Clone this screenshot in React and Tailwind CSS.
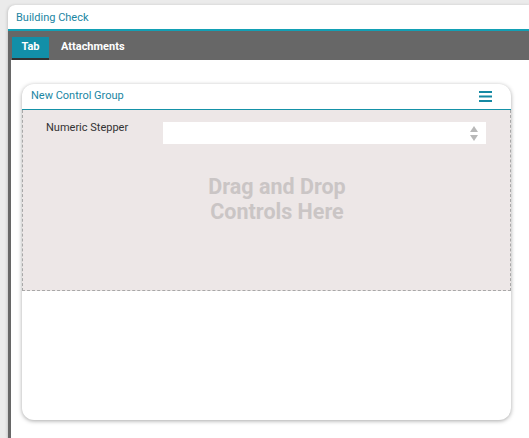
import React from "react";

const FONT = { fontFamily: "Roboto, 'Liberation Sans', sans-serif" };

function StepperArrows() {
  return (
    <div className="flex flex-col items-center gap-[3px] pr-[8px]">
      <svg width="8" height="6" viewBox="0 0 8 6">
        <path d="M4 0 L8 6 L0 6 Z" fill="#b8b8b8" />
      </svg>
      <svg width="8" height="6" viewBox="0 0 8 6">
        <path d="M0 0 L8 0 L4 6 Z" fill="#b8b8b8" />
      </svg>
    </div>
  );
}

function Hamburger() {
  return (
    <svg width="13" height="11" viewBox="0 0 13 11">
      <rect x="0" y="0" width="13" height="2" fill="#1589a3" />
      <rect x="0" y="4.5" width="13" height="2" fill="#1589a3" />
      <rect x="0" y="9" width="13" height="2" fill="#1589a3" />
    </svg>
  );
}

export default function App() {
  return (
    <div className="w-[529px] h-[438px] bg-[#ebebeb] pt-[5px] pl-[7px] overflow-hidden" style={FONT}>
      <div className="h-[433px] bg-white rounded-tl-[8px] border-l border-[#d4d4d4] flex flex-col shadow-[0_0_3px_rgba(0,0,0,0.15)]">
        <div className="h-[26px] flex items-center pl-[8px] pt-[2px] border-b-2 border-[#12a0b5] text-[11px] text-[#1a86a3]">
          Building Check
        </div>
        <div className="h-[29px] bg-[#676767] flex items-end pl-[4px] gap-[12px]">
          <div className="w-[37px] h-[23px] bg-[#128fa8] border-b-2 border-[#333] flex items-center justify-center text-white text-[11px] font-bold">
            Tab
          </div>
          <div className="h-[23px] flex items-center text-white text-[11px] font-bold pb-[2px]">
            Attachments
          </div>
        </div>
        <div className="flex-1 border-l-[3px] border-[#676767] pl-[11px] pt-[24px]">
          <div className="w-[489px] h-[336px] bg-white rounded-[12px] shadow-[0_1px_4px_rgba(0,0,0,0.35)] flex flex-col overflow-hidden">
            <div className="h-[26px] flex items-center justify-between pl-[9px] pr-[19px] border-b border-[#1592a8] text-[11px] text-[#1a86a3]">
              <span>New Control Group</span>
              <Hamburger />
            </div>
            <div className="h-[181px] bg-[#ede7e7] border border-dashed border-[#a8a8a8] border-t-0 flex flex-col">
              <div className="flex items-start pt-[12px] pl-[23px] pr-[24px]">
                <div className="w-[117px] text-[11px] text-[#333] leading-[12px] pt-[-1px]">
                  Numeric Stepper
                </div>
                <div className="flex-1 h-[22px] bg-white flex items-center justify-end">
                  <StepperArrows />
                </div>
              </div>
              <div className="flex-1 flex items-start justify-center pl-[21px] pt-[30px]">
                <div className="text-center text-[21.5px] leading-[25px] font-bold text-[#cac5c5]">
                  Drag and Drop
                  <br />
                  Controls Here
                </div>
              </div>
            </div>
          </div>
        </div>
      </div>
    </div>
  );
}
